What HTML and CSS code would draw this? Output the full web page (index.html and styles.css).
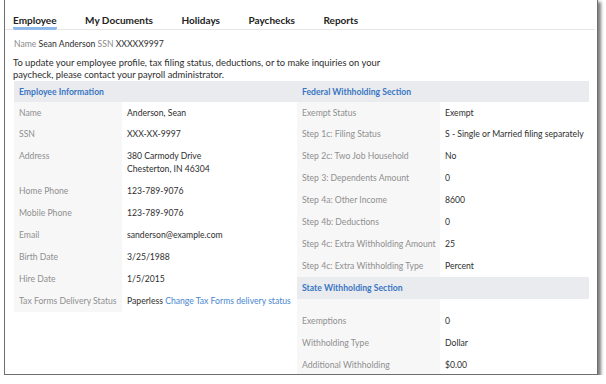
FILE: index.html
```html
<!DOCTYPE html>
<html>
<head>
  <title>Employee</title>
  <link rel="stylesheet" href="styles.css">
</head>
<body>
  <div class="window">
    <div class="tabs">
      <div class="tab active">Employee</div>
      <div class="tab">My Documents</div>
      <div class="tab">Holidays</div>
      <div class="tab">Paychecks</div>
      <div class="tab">Reports</div>
    </div>

    <div class="content">
      <div class="who">
        <span class="muted">Name</span> Sean Anderson <span class="muted">SSN</span> XXXXX9997
      </div>
      <p class="notice">To update your employee profile, tax filing status, deductions, or to make inquiries on your paycheck, please contact your payroll administrator.</p>

      <div class="columns">
        <div class="section left">
          <div class="section-title">Employee Information</div>
          <div class="rows">
            <div class="label">Name</div><div class="value">Anderson, Sean</div>
            <div class="label">SSN</div><div class="value">XXX-XX-9997</div>
            <div class="label">Address</div><div class="value">380 Carmody Drive<br>Chesterton, IN 46304</div>
            <div class="label">Home Phone</div><div class="value">123-789-9076</div>
            <div class="label">Mobile Phone</div><div class="value">123-789-9076</div>
            <div class="label">Email</div><div class="value">sanderson@example.com</div>
            <div class="label">Birth Date</div><div class="value">3/25/1988</div>
            <div class="label">Hire Date</div><div class="value">1/5/2015</div>
            <div class="label">Tax Forms Delivery Status</div><div class="value">Paperless <a href="#">Change Tax Forms delivery status</a></div>
          </div>
        </div>

        <div class="section right">
          <div class="section-title">Federal Withholding Section</div>
          <div class="rows">
            <div class="label">Exempt Status</div><div class="value">Exempt</div>
            <div class="label">Step 1c: Filing Status</div><div class="value">S - Single or Married filing separately</div>
            <div class="label">Step 2c: Two Job Household</div><div class="value">No</div>
            <div class="label">Step 3: Dependents Amount</div><div class="value">0</div>
            <div class="label">Step 4a: Other Income</div><div class="value">8600</div>
            <div class="label">Step 4b: Deductions</div><div class="value">0</div>
            <div class="label">Step 4c: Extra Withholding Amount</div><div class="value">25</div>
            <div class="label">Step 4c: Extra Withholding Type</div><div class="value">Percent</div>
          </div>
          <div class="section-title state">State Withholding Section</div>
          <div class="rows">
            <div class="label spacer"></div><div class="value spacer"></div>
            <div class="label">Exemptions</div><div class="value">0</div>
            <div class="label">Withholding Type</div><div class="value">Dollar</div>
            <div class="label">Additional Withholding</div><div class="value">$0.00</div>
          </div>
        </div>
      </div>
    </div>
  </div>
</body>
</html>
```

FILE: styles.css
```css
body {
  margin: 0;
  background-color: #fff;
  font-family: Lato, "Open Sans", Arial, sans-serif;
  color: #2e2e2e;
  font-size: 8.65px;
}
.window {
  margin: -1px 0 0 4px;
  width: 592px;
  height: 374px;
  border: 1px solid #6e6e6e;
  box-shadow: 3px 3px 3px rgba(0, 0, 0, 0.5);
  background-color: #fff;
  overflow: hidden;
}

/* Tabs */
.tabs {
  display: flex;
  gap: 28.5px;
  padding: 0 8px;
  height: 29px;
  border-bottom: 1px solid #e6e6e6;
  margin-right: 2px;
}
.tab {
  display: flex;
  align-items: flex-end;
  height: 27px;
  padding-bottom: 1px;
  box-sizing: border-box;
  margin-top: 3px;
  font-size: 10px;
  line-height: 12px;
  font-weight: bold;
  color: #222;
  border-bottom: 3px solid transparent;
}
.tab.active {
  border-bottom-color: #8fb9ea;
  border-radius: 0 0 2px 2px;
}

/* Content */
.content {
  padding: 0 9px;
}
.who {
  margin-top: 8px;
  line-height: 12px;
}
.muted {
  color: #8a8a8a;
}
.notice {
  margin: 7px 0 0 -1px;
  font-size: 9.35px;
  line-height: 12px;
  width: 385px;
}
.columns {
  display: grid;
  grid-template-columns: 283px 292px;
}
.section-title {
  background-color: #e9ebee;
  color: #3a76c4;
  font-weight: bold;
  height: 21px;
  line-height: 21px;
  padding-left: 5px;
}
.section-title.state {
  height: 22px;
  line-height: 22px;
}
.rows {
  display: grid;
  grid-template-columns: 108px 1fr;
}
.right .rows {
  grid-template-columns: 143px 1fr;
}
.label, .value {
  padding: 4.5px 5px;
  line-height: 12.9px;
  white-space: nowrap;
}
.label {
  background-color: #f7f7f7;
  color: #8f8f8f;
}
.label.spacer, .value.spacer {
  height: 11px;
  padding: 0;
}
a {
  color: #4a87d0;
  text-decoration: none;
}
```
